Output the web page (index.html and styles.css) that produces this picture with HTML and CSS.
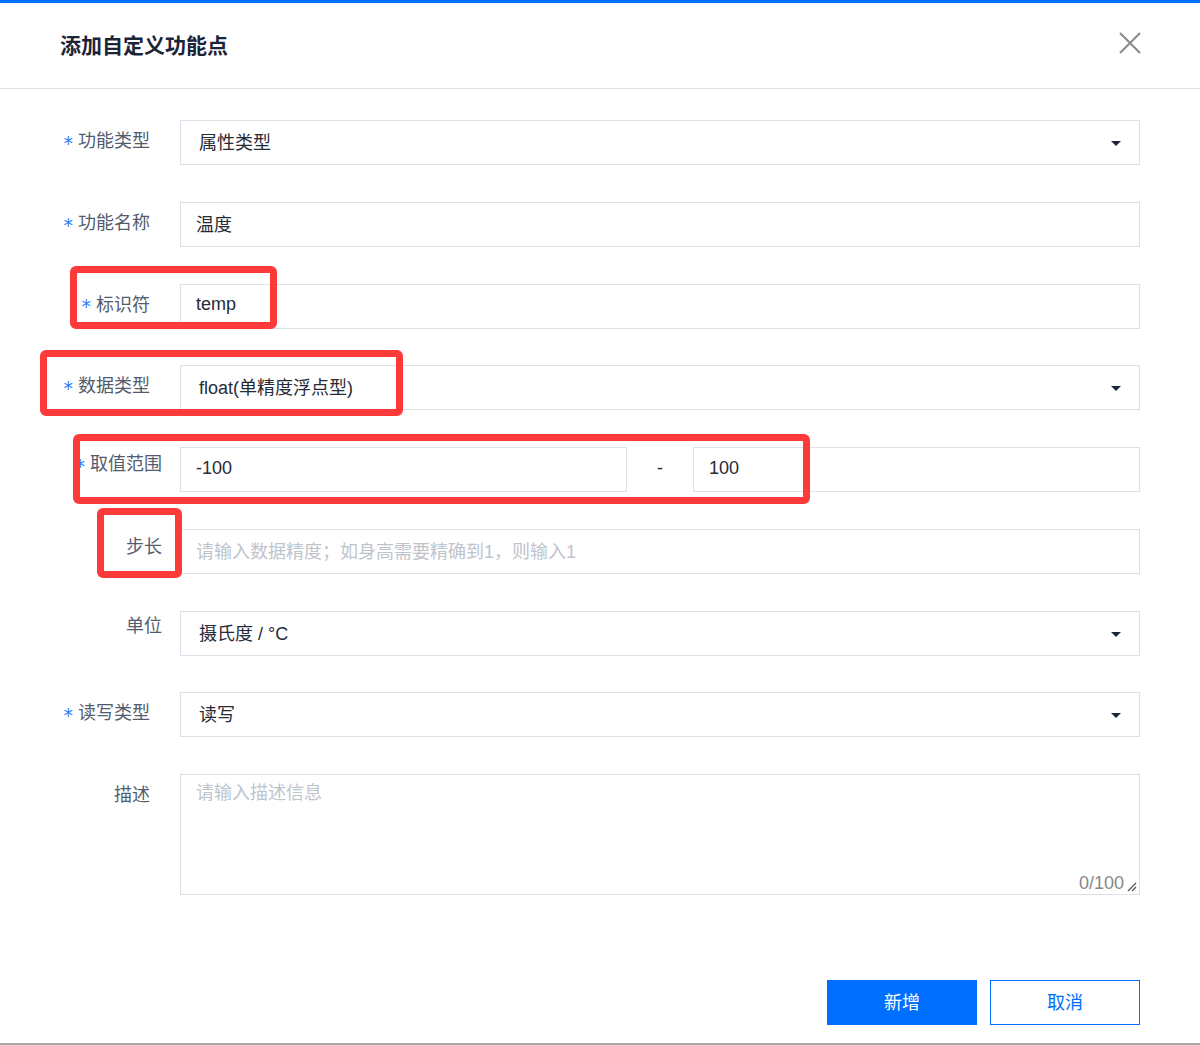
FILE: index.html
```html
<!DOCTYPE html>
<html lang="zh-CN">
<head>
<meta charset="utf-8">
<title>添加自定义功能点</title>
<link rel="stylesheet" href="styles.css">
</head>
<body>
<div class="dialog">
  <div class="header">
    <h1 class="title">添加自定义功能点</h1>
    <svg class="close" width="22" height="22" viewBox="0 0 22 22"><path d="M1 1 L21 21 M21 1 L1 21" stroke="#8a8a8a" stroke-width="2" fill="none"/></svg>
  </div>
  <div class="form">
    <div class="row">
      <div class="label"><span class="star">*</span>功能类型</div>
      <div class="control"><div class="input select"><span>属性类型</span><i class="arrow"></i></div></div>
    </div>
    <div class="row">
      <div class="label"><span class="star">*</span>功能名称</div>
      <div class="control"><div class="input">温度</div></div>
    </div>
    <div class="row">
      <div class="label"><span class="star">*</span>标识符</div>
      <div class="control"><div class="input">temp</div></div>
    </div>
    <div class="row">
      <div class="label"><span class="star">*</span>数据类型</div>
      <div class="control"><div class="input select"><span>float(单精度浮点型)</span><i class="arrow"></i></div></div>
    </div>
    <div class="row">
      <div class="label plain range-label"><span class="star">*</span>取值范围</div>
      <div class="control range">
        <div class="input half">-100</div>
        <div class="dash">-</div>
        <div class="input half">100</div>
      </div>
    </div>
    <div class="row">
      <div class="label plain step-label">步长</div>
      <div class="control"><div class="input placeholder">请输入数据精度；如身高需要精确到1，则输入1</div></div>
    </div>
    <div class="row">
      <div class="label plain unit-label">单位</div>
      <div class="control"><div class="input select"><span>摄氏度 / °C</span><i class="arrow"></i></div></div>
    </div>
    <div class="row">
      <div class="label"><span class="star">*</span>读写类型</div>
      <div class="control"><div class="input select"><span>读写</span><i class="arrow"></i></div></div>
    </div>
    <div class="row last">
      <div class="label">描述</div>
      <div class="control">
        <div class="textarea">
          <span class="placeholder-text">请输入描述信息</span>
          <span class="counter">0/100</span>
          <svg class="resize" width="11" height="11" viewBox="0 0 11 11"><path d="M10 2 L2 10 M10 6 L6 10" stroke="#555" stroke-width="1.2" fill="none"/></svg>
        </div>
      </div>
    </div>
  </div>
  <div class="footer">
    <button class="btn primary">新增</button>
    <button class="btn ghost">取消</button>
  </div>
</div>
<div class="mark mark-1"></div>
<div class="mark mark-2"></div>
<div class="mark mark-3"></div>
<div class="mark mark-4"></div>
</body>
</html>
```
FILE: styles.css
```css
* { box-sizing: border-box; }
html, body { margin: 0; padding: 0; }
body {
  position: relative;
  width: 1200px;
  height: 1045px;
  overflow: hidden;
  background: #fff;
  font-family: "Liberation Sans", "Noto Sans CJK SC", sans-serif;
}
.dialog {
  height: 1045px;
  border-top: 3px solid #006eff;
  border-bottom: 2px solid #a9a9a9;
}
.header {
  height: 86px;
  display: flex;
  align-items: center;
  justify-content: space-between;
  padding: 0 59px 0 60px;
  border-bottom: 1px solid #dde2ea;
}
.title {
  margin: 0;
  font-size: 21px;
  font-weight: bold;
  color: #1c2438;
  line-height: 30px;
}
.close { margin-top: -5px; }
.form { padding-top: 31px; padding-right: 60px; }
.row { display: flex; margin-bottom: 36.75px; }
.row.last { margin-bottom: 0; }
.label {
  width: 180px;
  flex: none;
  padding-right: 30px;
  text-align: right;
  font-size: 18px;
  color: #525c6e;
  height: 45px;
  line-height: 43px;
  white-space: nowrap;
}
.label.plain { padding-right: 18px; line-height: 30px; height: auto; }
.range-label { padding-top: 2px; }
.step-label { padding-top: 3px; }
.unit-label { padding-top: 0; }
.star {
  display: inline-block;
  color: #2f7df6;
  font-family: "DejaVu Sans", sans-serif;
  font-size: 19px;
  margin-right: 5px;
  vertical-align: middle;
  position: relative;
  top: 1px;
  line-height: 1;
}
.control { flex: 1; min-width: 0; }
.input {
  height: 45px;
  border: 1px solid #dce1e9;
  padding: 0 15px 3px;
  font-size: 18px;
  color: #262b36;
  display: flex;
  align-items: center;
  white-space: nowrap;
}
.input.select { padding-left: 18px; padding-right: 18px; justify-content: space-between; }
.arrow {
  width: 0; height: 0;
  border-left: 5px solid transparent;
  border-right: 5px solid transparent;
  border-top: 5px solid #1c2438;
  margin-top: 5px;
}
.input.placeholder { color: #bfc4cc; }
.range { display: flex; align-items: center; }
.input.half { width: 447px; flex: none; }
.range .input.half:last-child { flex: 1; width: auto; }
.dash { width: 66px; text-align: center; font-size: 18px; color: #262b36; padding-bottom: 2px; }
.textarea {
  position: relative;
  height: 121px;
  border: 1px solid #dce1e9;
  padding: 5px 15px;
  font-size: 18px;
  line-height: 27px;
}
.placeholder-text { color: #bfc4cc; }
.counter {
  position: absolute;
  right: 15px;
  bottom: -3px;
  color: #888;
  font-size: 18px;
  line-height: 27px;
}
.resize { position: absolute; right: 2px; bottom: 2px; }
.footer {
  display: flex;
  justify-content: flex-end;
  gap: 13px;
  padding-right: 60px;
  margin-top: 85px;
}
.btn {
  width: 150px;
  height: 45px;
  font-size: 18px;
  font-family: "Liberation Sans", "Noto Sans CJK SC", sans-serif;
  cursor: pointer;
  padding: 0 0 4px;
}
.btn.primary { background: #006eff; color: #fff; border: 1px solid #006eff; }
.btn.ghost { background: #fff; color: #006eff; border: 1px solid #006eff; }
.mark {
  position: absolute;
  border: 7px solid #fc3a3a;
  border-radius: 6px;
}
.mark-1 { left: 70px; top: 266px; width: 207px; height: 63px; }
.mark-2 { left: 40px; top: 350px; width: 363px; height: 66px; }
.mark-3 { left: 73px; top: 434px; width: 737px; height: 70px; }
.mark-4 { left: 97px; top: 508px; width: 85px; height: 70px; }
```
